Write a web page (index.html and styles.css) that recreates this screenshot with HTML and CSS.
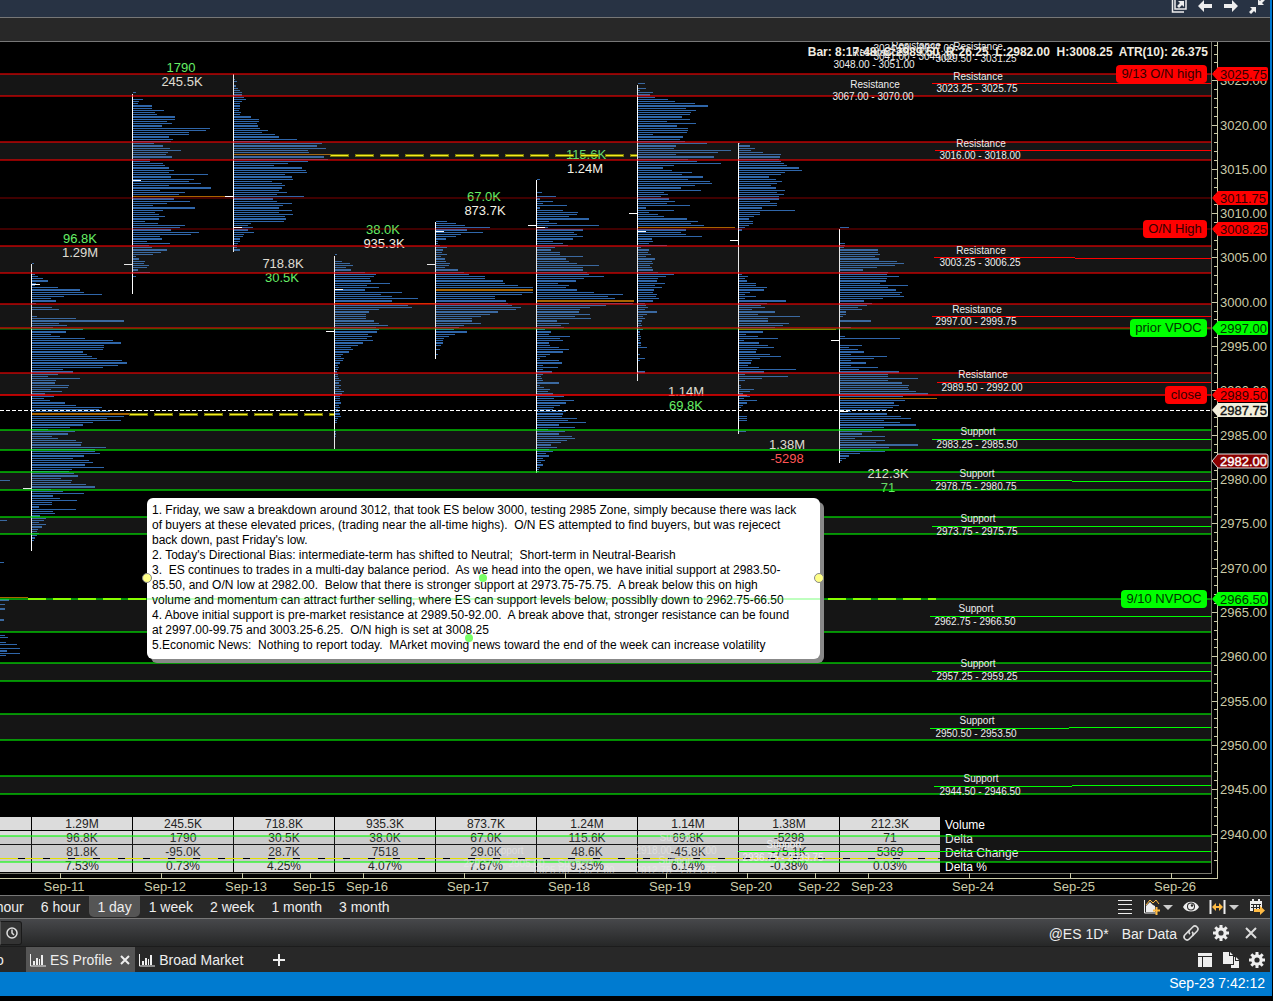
FILE: index.html
```html
<!DOCTYPE html>
<html lang="en">
<head>
	<meta charset="utf-8">
	<title>ES Profile</title>
	<link rel="stylesheet" href="styles.css">
</head>
<body>
<div class="window">
	<header class="titlebar">
		<button class="icon" aria-label="Pop out"><svg width="16" height="16" viewBox="0 0 16 16"><path d="M4 1h11v10H4zM1.500 2v12H13" fill="none" stroke="#eee" stroke-width="1.500"/><path d="M7 3h6v6l-2-2-3 3-2-2 3-3z" fill="#eee"/></svg></button>
		<button class="icon" aria-label="Back"><svg width="16" height="16" viewBox="0 0 16 16"><path d="M1 8l6-6v4h8v4H7v4z" fill="#eee"/></svg></button>
		<button class="icon" aria-label="Forward"><svg width="16" height="16" viewBox="0 0 16 16"><path d="M15 8L9 2v4H1v4h8v4z" fill="#eee"/></svg></button>
		<button class="icon" aria-label="Collapse"><svg width="16" height="16" viewBox="0 0 16 16"><path d="M1 9h6v6l-2-2-3 3-2-2 3-3zM15 7H9V1l2 2 3-3 2 2-3 3z" fill="#eee"/></svg></button>
	</header>
	<div class="toolbar"></div>

	<main class="chart">
		<svg id="chart" viewBox="0 42 1270 853">
			<g id="profiles"></g>
			<g id="values" class="value"></g>
			<foreignObject x="0" y="817" width="1211" height="56">
				<table class="stats" id="stats"></table>
			</foreignObject>
			<g id="bands" shape-rendering="crispEdges"></g>
			<g id="dashes" shape-rendering="crispEdges"></g>
			<foreignObject x="147" y="498" width="680" height="168">
				<div class="note">
					<p>1. Friday, we saw a breakdown around 3012, that took ES below 3000, testing 2985 Zone, simply because there was lack of buyers at these elevated prices, (trading near the all-time highs).  O/N ES attempted to find buyers, but was rejecect back down, past Friday's low.</p>
					<p>2. Today's Directional Bias: intermediate-term has shifted to Neutral;  Short-term in Neutral-Bearish</p>
					<p>3.  ES continues to trades in a multi-day balance period.  As we head into the open, we have initial support at 2983.50-85.50, and O/N low at 2982.00.  Below that there is stronger support at 2973.75-75.75.  A break below this on high volume and momentum can attract further selling, where ES can support levels below, possiblly down to 2962.75-66.50</p>
					<p>4. Above initial support is pre-market resistance at 2989.50-92.00.  A break above that, stronger resistance can be found at 2997.00-99.75 and 3003.25-6.25.  O/N high is set at 3008.25</p>
					<p>5.Economic News:  Nothing to report today.  MArket moving news toward the end of the week can increase volatility</p>
				</div>
			</foreignObject>
			<g id="handles">
				<rect x="147" y="598" width="673" height="2" fill="#0f0" opacity=".25"/>
				<circle cx="147" cy="578" r="4.5" fill="#ff8" stroke="#888"/>
				<circle cx="819" cy="578" r="4.5" fill="#ff8" stroke="#888"/>
				<circle cx="483" cy="578" r="4" fill="#7f6"/>
				<circle cx="469" cy="638" r="4" fill="#7f6"/>
			</g>
			<g id="zones" class="zone"></g>
			<text class="bar-info" x="1208" y="56" text-anchor="end">Bar: 8:17:48  C:2989.50  R:26.25  L:2982.00  H:3008.25  ATR(10): 26.375</text>
			<g id="axis" class="axis" shape-rendering="crispEdges"></g>
			<g id="tags" class="tags"></g>
		</svg>
	</main>

	<nav class="periods">
		<button class="cut">4 hour</button><button>6 hour</button><button class="on">1 day</button><button>1 week</button><button>2 week</button><button>1 month</button><button>3 month</button>
		<div class="tools">
			<button class="icon" aria-label="List"><svg width="16" height="16" viewBox="0 0 16 16"><path d="M1 1.500h14M1 5.500h14M1 10.500h14M1 14.500h14" stroke="#eee"/></svg></button>
			<button class="icon wide" aria-label="Studies"><svg width="30" height="16" viewBox="0 0 30 16"><path d="M1.500 1v13H14" fill="none" stroke="#eee"/><path d="M3 13V7l4-4 3 3 2 1v6z" fill="#eee"/><path d="M3 6l4-5 3 3 3-3 3 4" fill="none" stroke="#fb4"/><path d="M13.500 8v8M10 11.500h7" stroke="#fb4" stroke-width="2"/><path d="M20 6h10l-5 5z" fill="#ccc"/></svg></button>
			<button class="icon" aria-label="Show"><svg width="16" height="16" viewBox="0 0 16 16"><path d="M0 8c3-7 13-7 16 0-3 6-13 6-16 0z" fill="#eee"/><circle cx="8" cy="7.500" r="4" fill="#282828"/><circle cx="8" cy="7.500" r="3" fill="#eee"/><circle cx="9" cy="6.500" r="1.200" fill="#282828"/></svg></button>
			<button class="icon wide" aria-label="Spacing"><svg width="30" height="16" viewBox="0 0 30 16"><path d="M1.500 1v14M15.500 1v14" stroke="#eee" stroke-width="2"/><path d="M3 8l4-4v3h3V4l4 4-4 4V9H7v3z" fill="#fb4"/><path d="M20 6h10l-5 5z" fill="#ccc"/></svg></button>
			<button class="icon" aria-label="Calendar"><svg width="16" height="16" viewBox="0 0 16 16"><path d="M1 2h12v10H1z" fill="#eee"/><path d="M2 5.500h10M2 8.500h10M4.500 5v7M7.500 5v7M10.500 5v7" stroke="#282828"/><path d="M3 0h2v3H3zM9 0h2v3H9z" fill="#eee"/><path d="M5 10h6V7l5 4.500-5 4.500v-3H5z" fill="#fb4"/></svg></button>
		</div>
	</nav>

	<div class="symbolbar">
		<button class="clock" aria-label="Session"><svg width="14" height="14" viewBox="0 0 14 14"><circle cx="7" cy="7" r="5" fill="none" stroke="#ddd" stroke-width="1.500"/><path d="M7 3.500V7l2 2" fill="none" stroke="#ddd" stroke-width="1.500"/></svg></button>
		<span class="symbol">@ES 1D*</span>
		<span class="data">Bar Data</span>
		<button class="icon" aria-label="Link"><svg width="16" height="16" viewBox="0 0 16 16"><g fill="none" stroke="#ddd" stroke-width="1.600" transform="rotate(-45 8 8)"><path d="M9 5H2.500a3 3 0 0 0 0 6H7a3 3 0 0 0 2.500-3"/><path d="M7 11h6.500a3 3 0 0 0 0-6H9a3 3 0 0 0-2.500 3"/></g></svg></button>
		<button class="icon" aria-label="Settings"><svg width="16" height="16" viewBox="0 0 16 16"><use href="#gear"/></svg></button>
		<button class="icon" aria-label="Close"><svg width="16" height="16" viewBox="0 0 16 16"><path d="M3 3l10 10M13 3L3 13" stroke="#ddd" stroke-width="2"/></svg></button>
	</div>

	<div class="tabs">
		<a href="#" class="tab cut">o</a>
		<a href="#" class="tab on"><svg width="16" height="14" viewBox="0 0 16 14"><use href="#bars"/></svg>ES Profile<svg class="x" width="10" height="10" viewBox="0 0 10 10"><path d="M1 1l8 8M9 1L1 9" stroke="#eee" stroke-width="2"/></svg></a>
		<a href="#" class="tab"><svg width="16" height="14" viewBox="0 0 16 14"><use href="#bars"/></svg>Broad Market</a>
		<button class="add" aria-label="Add tab"><svg width="12" height="12" viewBox="0 0 12 12"><path d="M6 0v12M0 6h12" stroke="#eee" stroke-width="2"/></svg></button>
		<div class="tools">
			<button class="icon" aria-label="Layout"><svg width="16" height="16" viewBox="0 0 16 16"><path d="M1 1h14v3H1zM1 5h4v10H1zM6 5h9v10H6z" fill="#eee"/></svg></button>
			<button class="icon" aria-label="Copy"><svg width="16" height="16" viewBox="0 0 16 16"><path d="M0 0h6v4h4v8H0zM7 0l3 3H7z" fill="#eee"/><path d="M11 5h1v4h4v7H8v-3h3zM13 5l3 3h-3z" fill="#eee"/></svg></button>
			<button class="icon" aria-label="Settings"><svg width="16" height="16" viewBox="0 0 16 16"><use href="#gear"/></svg></button>
		</div>
	</div>

	<footer class="status">Sep-23 7:42:12</footer>
</div>

<svg class="defs" width="0" height="0">
	<defs>
		<g id="gear"><circle cx="8" cy="8" r="4.200" fill="none" stroke="#eee" stroke-width="3.200"/><path d="M8 0v3.500M8 12.500V16M0 8h3.500M12.500 8H16M2.300 2.300l2.500 2.500M11.200 11.200l2.500 2.500M2.300 13.700l2.500-2.500M11.200 4.800l2.500-2.500" stroke="#eee" stroke-width="3"/></g>
		<g id="bars"><path d="M.500 1v12H16" fill="none" stroke="#eee"/><path d="M3 8h2v4H3zM6 5h2v7H6zM9 6h1v6H9zM11 2h2v10h-2z" fill="#eee"/></g>
	</defs>
</svg>
<script src="script.js"></script>
</body>
</html>
```
FILE: styles.css
```css
*{margin: 0;padding: 0;box-sizing: border-box;}
html{background: #000;}
body{font-family: "Liberation Sans", Arial, sans-serif;font-size: 14px;color: #eee;}
a{color: inherit;text-decoration: none;}
button{background: none;border: 0;font: inherit;color: inherit;cursor: pointer;}
svg{display: block;}
.defs{position: absolute;}

.window{margin-right: 1px;border-right: 2px solid #0078d0;overflow: hidden;}

.titlebar{height: 18px;background: #283344;border-bottom: 1px solid #777;display: flex;justify-content: flex-end;align-items: flex-start;gap: 10px;padding-right: 5px;}
.titlebar .icon{margin-top: -2px;}
.toolbar{height: 24px;background: #282828;border-bottom: 1px solid #777;}
.icon{width: 16px;height: 16px;flex: none;}
.icon.wide{width: 30px;}

.chart{background: #000;border-right: 1px solid #777;margin-right: -1px;}
.chart > svg{width: 100%;height: auto;}
#chart text{white-space: pre;}
.value{font-size: 13px;text-anchor: middle;fill: #f4f0e4;}
.value .up{fill: #6e6;}
.value .down{fill: #f55;}
.zone{font-size: 10px;text-anchor: middle;fill: #eee;}
.bar-info{font-size: 12px;font-weight: bold;fill: #f0ece0;}
.axis{font-size: 13px;fill: #cbcba8;}
.axis .date{text-anchor: middle;}
.tags{font-size: 13px;}

.stats{width: 100%;table-layout: fixed;border-spacing: 0;font-size: 12px;line-height: 12px;color: #222;}
.stats td{width: 101px;height: 14px;background: #dcdcdc;border-right: 1px solid #000;border-bottom: 1px solid #000;text-align: center;padding-top: 1px;}
.stats td:first-child{width: 32px;}
.stats th{height: 14px;font-weight: normal;text-align: left;color: #fff;padding: 1px 0 0 4px;}

.note{width: 673px;height: 161px;background: #fff;border-radius: 6px;box-shadow: 4px 4px 0 #888;padding: 5px 22px 5px 5px;color: #000;font-size: 12px;line-height: 15px;}
.note p{white-space: pre-wrap;}

.periods{height: 24px;background: #282828;border-top: 1px solid #777;border-bottom: 1px solid #777;display: flex;align-items: flex-start;gap: 1px;padding-right: 5px;}
.periods > button{height: 21px;padding: 0 8px;white-space: nowrap;border-radius: 0 0 5px 5px;}
.periods > .cut{margin-left: -24px;}
.periods > .on{background: #555;}
.tools{margin-left: auto;display: flex;gap: 10px;align-items: center;}
.periods .tools{padding-top: 3px;}

.symbolbar{height: 28px;background: linear-gradient(#47484b, #262727);border-bottom: 1px solid #1c1c1c;display: flex;align-items: center;padding-right: 11px;}
.clock{width: 22px;height: 24px;padding-left: 4px;margin-right: auto;background: #333;border: 1px solid #1a1a1a;border-left-color: #555;border-radius: 0 3px 3px 0;}
.symbol{margin-right: 13px;padding-top: 2px;}
.data{margin-right: 6px;padding-top: 2px;}
.symbolbar .icon + .icon{margin-left: 14px;}

.tabs{height: 25px;background: #282828;display: flex;align-items: stretch;padding-right: 5px;}
.tab{display: flex;align-items: center;gap: 4px;padding: 0 4px;white-space: nowrap;}
.tab.cut{width: 26px;padding: 0;text-indent: -4px;}
.tab.on{background: #555;padding-right: 5px;}
.tab .x{margin-left: 4px;}
.add{padding: 0 26px;}
.tabs .tools{gap: 10px;}

.status{height: 24px;background: #007bd0;color: #fff;text-align: right;line-height: 23px;padding-right: 5px;}
```
FILE: script.js
```js
var ROW = 2.2156;
var TOP = 68.25;

// y on the chart for a price
function py(price) {
	return Math.round(124.5 + (3020 - price) * 8.8625);
}
function rect(x, y, w, h, fill, op) {
	return '<rect x="' + x + '" y="' + y + '" width="' + w + '" height="' + h + '" fill="' + fill + '"' + (op ? ' opacity="' + op + '"' : '') + '/>';
}
function text(x, y, str, cls) {
	return '<text x="' + x + '" y="' + y + '"' + (cls ? ' class="' + cls + '"' : '') + '>' + str + '</text>';
}
function put(id, html) {
	document.getElementById(id).innerHTML = html;
}

// x, first row, poc row, line top, line bottom, left tick, right tick, widths
var profiles = [
	[31, 88, 156, 264, 551, 488, 284, "2 0 0 0 0 3 6 11 16 4 3 26 48 52 70 32 19 24 4 0 20 27 0 0 5 44 92 27 35 21 51 34 19 28 53 81 89 72 72 71 51 55 60 65 90 95 86 71 31 41 26 16 48 24 23 37 36 19 30 13 22 12 18 33 44 70 67 78 98 92 75 89 61 51 38 16 43 36 20 26 44 50 49 74 63 63 68 52 41 57 61 53 72 40 37 42 46 29 40 39 54 63 19 31 52 21 28 45 20 20 7 44 21 23 8 14 12 7 14 10 6 5 7 5 3 2"],
	[132, 11, 58, 94, 294, 264, 180, "3 0 0 10 6 5 19 19 31 22 24 42 42 34 39 29 77 73 56 56 36 40 38 21 30 37 48 35 33 39 17 17 30 32 36 41 36 75 38 61 56 68 36 78 27 52 46 101 41 57 34 20 62 30 22 26 32 26 12 25 52 47 38 66 58 27 29 14 37 16 19 34 28 20 3 6 12 11 16 14 5 17 0 3"],
	[233, 5, 39, 74, 252, 196, 227, "1 3 0 2 4 6 8 8 10 12 8 6 6 6 5 7 6 17 25 25 23 24 26 34 28 41 45 63 36 88 83 92 74 75 98 90 94 74 54 40 68 72 73 51 58 59 38 48 51 48 45 53 43 70 39 43 58 49 45 58 45 59 51 52 50 17 14 19 14 20 10 9 6 6 4 3 3 6"],
	[334, 84, 106, 256, 449, 331, 289, "2 0 0 7 15 18 11 16 30 41 39 35 36 55 32 44 30 67 46 57 83 57 101 73 77 44 34 31 31 31 39 44 53 41 44 42 33 37 32 38 28 23 16 18 14 8 6 9 8 5 3 4 3 2 3 3 4 6 4 6 4 6 9 7 5 5 5 6 4 5 3 4 5 6 3 2 2 0 0 0 1 1 1"],
	[435, 69, 100, 222, 359, 264, 231, "11 20 29 54 31 47 25 20 10 2 2 4 11 7 6 11 5 9 10 14 13 9 22 28 33 49 49 67 69 82 97 98 97 86 59 59 70 72 76 85 80 62 54 45 36 36 45 28 23 18 31 19 13 8 7 7 5 0 4 0 2"],
	[536, 50, 105, 180, 473, 225, 227, "3 0 0 0 0 0 5 0 19 3 16 6 30 3 26 41 40 32 52 12 20 62 11 46 37 40 46 36 16 26 31 18 14 23 23 46 29 32 40 62 46 46 50 52 67 47 39 21 32 29 40 57 86 71 78 98 96 69 53 43 42 53 38 54 20 32 24 27 8 14 12 33 23 26 12 13 22 32 26 13 9 3 22 25 6 21 6 15 6 4 5 6 22 3 7 13 11 16 27 17 37 29 23 17 16 29 26 25 40 31 49 22 38 11 28 22 35 38 30 24 14 20 12 16 9 12 6 8 4 6 3 2 2"],
	[637, 7, 72, 85, 381, 213, 231, "7 0 8 2 15 12 17 30 37 57 70 48 58 53 52 44 52 29 58 39 50 50 49 15 45 42 47 69 38 36 93 80 38 76 50 59 83 36 25 34 54 44 65 50 72 74 57 43 63 26 30 23 31 37 29 52 8 36 11 20 26 49 60 53 66 98 48 43 48 64 14 15 11 29 3 11 10 13 8 17 14 15 12 14 15 20 36 28 20 19 27 17 24 16 15 19 18 21 15 7 8 10 7 19 9 5 7 4 3 4 2 5 2 2 3 3 2 3 3 9 0 0 2 0 7 2 0 0 0 0 7"],
	[738, 34, 118, 143, 434, 240, 395, "1 11 16 12 24 42 41 40 42 45 48 60 63 46 42 30 37 43 38 32 37 46 38 45 40 40 31 38 38 23 56 21 21 15 10 14 14 10 6 3 0 0 0 0 0 0 0 0 0 0 0 0 0 0 0 0 0 0 0 3 9 6 8 17 17 28 25 11 6 17 6 47 28 22 26 13 36 19 61 29 29 50 44 36 98 24 7 19 39 5 20 29 35 18 17 31 42 21 13 12 9 20 57 25 6 49 23 6 0 2 2 15 11 4 11 5 18 8 4 2 0 0 0 8 8 8 0 0 0 0 7"],
	[839, 72, 149, 229, 463, 340, 411, "9 0 0 0 0 0 0 5 5 4 38 38 40 35 39 57 64 55 37 23 48 47 59 47 46 40 68 48 56 62 60 64 43 24 32 27 18 22 6 6 3 0 31 0 0 11 0 0 0 5 60 0 0 22 9 18 24 11 47 34 11 26 11 38 19 59 48 48 78 48 62 69 68 69 76 88 63 98 65 54 59 53 47 11 47 61 71 44 60 76 44 79 32 22 45 15 45 36 78 49 31 45 20 9 6 2"],
	[-1, 186, 0, 0, 0, 0, 0, "10 0 0 0 0 0 0 0 0 0 0 0 0 0 0 0 0 0 7 0 0 0 0 0 0 0 0 0 0 0 0 0 0 0 0 0 0 4 0 0 0 0 0 0 0 0 0 0 0 0 0 0 0 0 9 0 5 0 5 0 0 0 0 4 0 0 0 0 0 0 5 8 0 6 17 0 20 7 20 6"]
];
var html = '';
profiles.forEach(function (p) {
	var d = '', poc = '';
	p[7].split(' ').forEach(function (w, i) {
		var k = p[1] + i;
		var y = Math.floor(TOP + ROW * k);
		var h = Math.floor(TOP + ROW * (k + 1)) - y - 1;
		if (k == p[2]) poc = rect(p[0], y, w, h, '#a86400');
		else if (w > 0) d += 'M' + (p[0] + 1) + ' ' + y + 'h' + w + 'v' + h + 'h-' + w + 'z';
	});
	html += '<path d="' + d + '" fill="#2f66a9"/>' + poc;
	if (p[4]) {
		html += rect(p[0], p[3], 1, p[4] - p[3], '#fff');
		html += rect(p[0] - 8, p[5], 8, 1, '#fff') + rect(p[0], p[6], 9, 1, '#fff');
	}
});
put('profiles', html);

var values = [
	[80, 243, '96.8K', 'up'], [80, 257, '1.29M'],
	[181, 72, '1790', 'up'], [182, 86, '245.5K'],
	[283, 268, '718.8K'], [282, 282, '30.5K', 'up'],
	[383, 234, '38.0K', 'up'], [384, 248, '935.3K'],
	[484, 201, '67.0K', 'up'], [485, 215, '873.7K'],
	[586, 159, '115.6K', 'up'], [585, 173, '1.24M'],
	[686, 396, '1.14M'], [686, 410, '69.8K', 'up'],
	[787, 449, '1.38M'], [787, 463, '-5298', 'down'],
	[888, 478, '212.3K'], [888, 492, '71', 'up']
];
put('values', values.map(function (v) { return text(v[0], v[1], v[2], v[3]); }).join(''));

var stats = {
	'Volume': ['1.29M', '245.5K', '718.8K', '935.3K', '873.7K', '1.24M', '1.14M', '1.38M', '212.3K'],
	'Delta': ['96.8K', '1790', '30.5K', '38.0K', '67.0K', '115.6K', '69.8K', '-5298', '71'],
	'Delta Change': ['81.8K', '-95.0K', '28.7K', '7518', '29.0K', '48.6K', '-45.8K', '-75.1K', '5369'],
	'Delta %': ['7.53%', '0.73%', '4.25%', '4.07%', '7.67%', '9.35%', '6.14%', '-0.38%', '0.03%']
};
html = '';
for (var name in stats) {
	html += '<tr><td></td><td>' + stats[name].join('</td><td>') + '</td><th scope="row">' + name + '</th></tr>';
}
put('stats', html);

// high, low, colour, mid line x, mid line y, label x, label y, end y
var bands = [
	[3025.75, 3023.25, 'r', 932, 83, 977, 80, 83],
	[3018, 3016, 'r', 935, 150, 980, 147, 150],
	[3006.25, 3003.25, 'r', 934, 257, 980, 254, 258],
	[2999.75, 2997, 'r', 932, 316, 976, 313, 316],
	[2992, 2989.5, 'r', 937, 382, 982, 378, 382],
	[2985.5, 2983.25, 'g', 932, 439, 977, 435, 439],
	[2980.75, 2978.75, 'g', 931, 480, 976, 477, 481],
	[2975.75, 2973.75, 'g', 932, 526, 977, 522, 526],
	[2966.5, 2962.75, 'g', 930, 616, 975, 612, 616],
	[2959.25, 2957.25, 'g', 932, 671, 977, 667, 671],
	[2953.5, 2950.5, 'g', 930, 728, 976, 724, 727],
	[2946.5, 2944.5, 'g', 934, 786, 980, 782, 785],
	[2939.75, 2936.75, 'g', 738, 851, 783, 848, 851]
];
html = '';
var labels = '';
bands.forEach(function (b) {
	var a = py(b[0]), z = py(b[1]), c = b[2] == 'r' ? '#f00' : '#0f0';
	html += rect(0, a, 1211, z - a, '#797979', .173);
	html += rect(0, a - 1, 1211, 2, c, .55) + rect(0, z - 1, 1211, 2, c, .55);
	html += '<path d="M' + b[3] + ' ' + (b[4] + .5) + 'L1211 ' + (b[7] + .5) + '" stroke="' + c + '"/>';
	labels += text(b[5] + 1, b[6], b[2] == 'r' ? 'Resistance' : 'Support');
	labels += text(b[5], b[6] + (b[2] == 'r' && b[0] > 2995 ? 12 : 13), b[1].toFixed(2) + ' - ' + b[0].toFixed(2));
});
html += rect(0, 197, 1211, 2, '#f00', .25) + rect(0, 228, 1211, 2, '#f00', .25);
html += rect(0, 394, 1211, 2, '#f00', .35) + rect(0, 328, 1211, 2, '#0f0', .25);
put('bands', html);

var extra = [
	[875, 88, 'Resistance'], [873, 100, '3067.00 - 3070.00'],
	[877, 56, 'Resistance'], [874, 68, '3048.00 - 3051.00'],
	[916, 49, 'Resistance'], [914, 60, '3041.00 - 3044.00'], [914, 52, '3034.00 - 3037.00'],
	[978, 50, 'Resistance'], [976, 62, '3029.50 - 3031.25']
];
var faint = [
	[506, 854, 'Support'], [504, 867, '2902.00 - 2905.00'],
	[575, 867, 'Support'], [574, 874, '2925.50 - 2927.00'],
	[677, 841, 'Support'], [676, 854, '2918.00 - 2920.00'],
	[676, 864, 'Support'], [676, 874, '2912.75 - 2914.75']
];
extra.forEach(function (e) { labels += text(e[0], e[1], e[2]); });
labels += '<g opacity=".55">';
faint.forEach(function (e) { labels += text(e[0], e[1], e[2]); });
put('zones', labels + '</g>');

function dashed(x1, x2, y) {
	return '<path d="M' + x1 + ' ' + (y + .5) + 'H' + x2 + '" stroke="#990" stroke-width="3" opacity=".8" stroke-dasharray="19 6"/>' +
		'<path d="M' + (x1 + 1) + ' ' + (y + .5) + 'H' + x2 + '" stroke="#f4ec20" stroke-dasharray="17 8"/>';
}
html = dashed(330, 637, 155) + dashed(129, 334, 414);
html += rect(0, 597, 28, 1, '#a86400');
html += '<path d="M28 598.5H936" stroke="#8f0" stroke-width="2" stroke-dasharray="18 7"/>';
html += rect(0, 858, 938, 1, '#e4e000');
html += '<path d="M18 858.5H938" stroke="#000" stroke-dasharray="7 18"/>';
html += '<path d="M0 410.5H1211" stroke="#fff" stroke-dasharray="4 2"/>';
put('dashes', html);

// price scale and dates
html = rect(0, 874, 1217, 21, '#000') + rect(0, 873, 1212, 1, '#77776c') + rect(1211, 42, 1, 832, '#77776c');
html += rect(1217, 42, 1, 837, '#cbcba8') + rect(0, 878, 1218, 1, '#cbcba8');
for (var p = 3029; p >= 2937; p--) {
	if (p % 5 == 0) {
		html += rect(1212, py(p), 5, 1, '#cbcba8') + text(1220, py(p) + 5, p.toFixed(2));
	} else {
		html += rect(1214, py(p), 3, 1, '#cbcba8');
	}
}
var dates = { 11: 60, 12: 161, 13: 242, 15: 310, 16: 363, 17: 464, 18: 565, 19: 666, 20: 747, 22: 815, 23: 868, 24: 969, 25: 1070, 26: 1171 };
for (var day in dates) {
	html += rect(dates[day], 873, 1, 5, '#cbcba8') + text(dates[day] + 4, 891, 'Sep-' + day, 'date');
}
put('axis', html);

// price, fill, text colour, name, box width
var tags = [
	[3025.75, '#f00', '#300', '9/13 O/N high', 91],
	[3011.75, '#f00', '#300'],
	[3008.25, '#f00', '#300', 'O/N High', 64],
	[2997, '#0f0', '#030', 'prior VPOC', 77],
	[2989.5, '#f00', '#300', 'close', 42],
	[2987.75, '#f2eedc', '#111'],
	[2982, '#8b0000', '#fff'],
	[2966.5, '#0f0', '#030', '9/10 NVPOC', 86]
];
html = '';
tags.forEach(function (t) {
	var y = py(t[0]);
	var white = t[0] == 2982;
	html += '<path d="M1212 ' + y + 'l6-7h48q2 0 2 2v10q0 2-2 2h-48z" fill="' + t[1] + '"' + (white ? ' stroke="#ddd"' : '') + '/>';
	html += '<text x="1220" y="' + (y + 5) + '" fill="' + t[2] + '"' + (t[0] == 2987.75 || white ? ' stroke="' + t[2] + '" stroke-width=".4"' : '') + '>' + t[0].toFixed(2) + '</text>';
	if (t[3]) {
		html += '<rect x="' + (1207 - t[4]) + '" y="' + (y - 9) + '" width="' + t[4] + '" height="18" rx="4" fill="' + t[1] + '"/>';
		html += '<text x="' + (1207 - t[4] / 2) + '" y="' + (y + 4) + '" fill="' + t[2] + '" text-anchor="middle">' + t[3] + '</text>';
	}
});
put('tags', html);
```
